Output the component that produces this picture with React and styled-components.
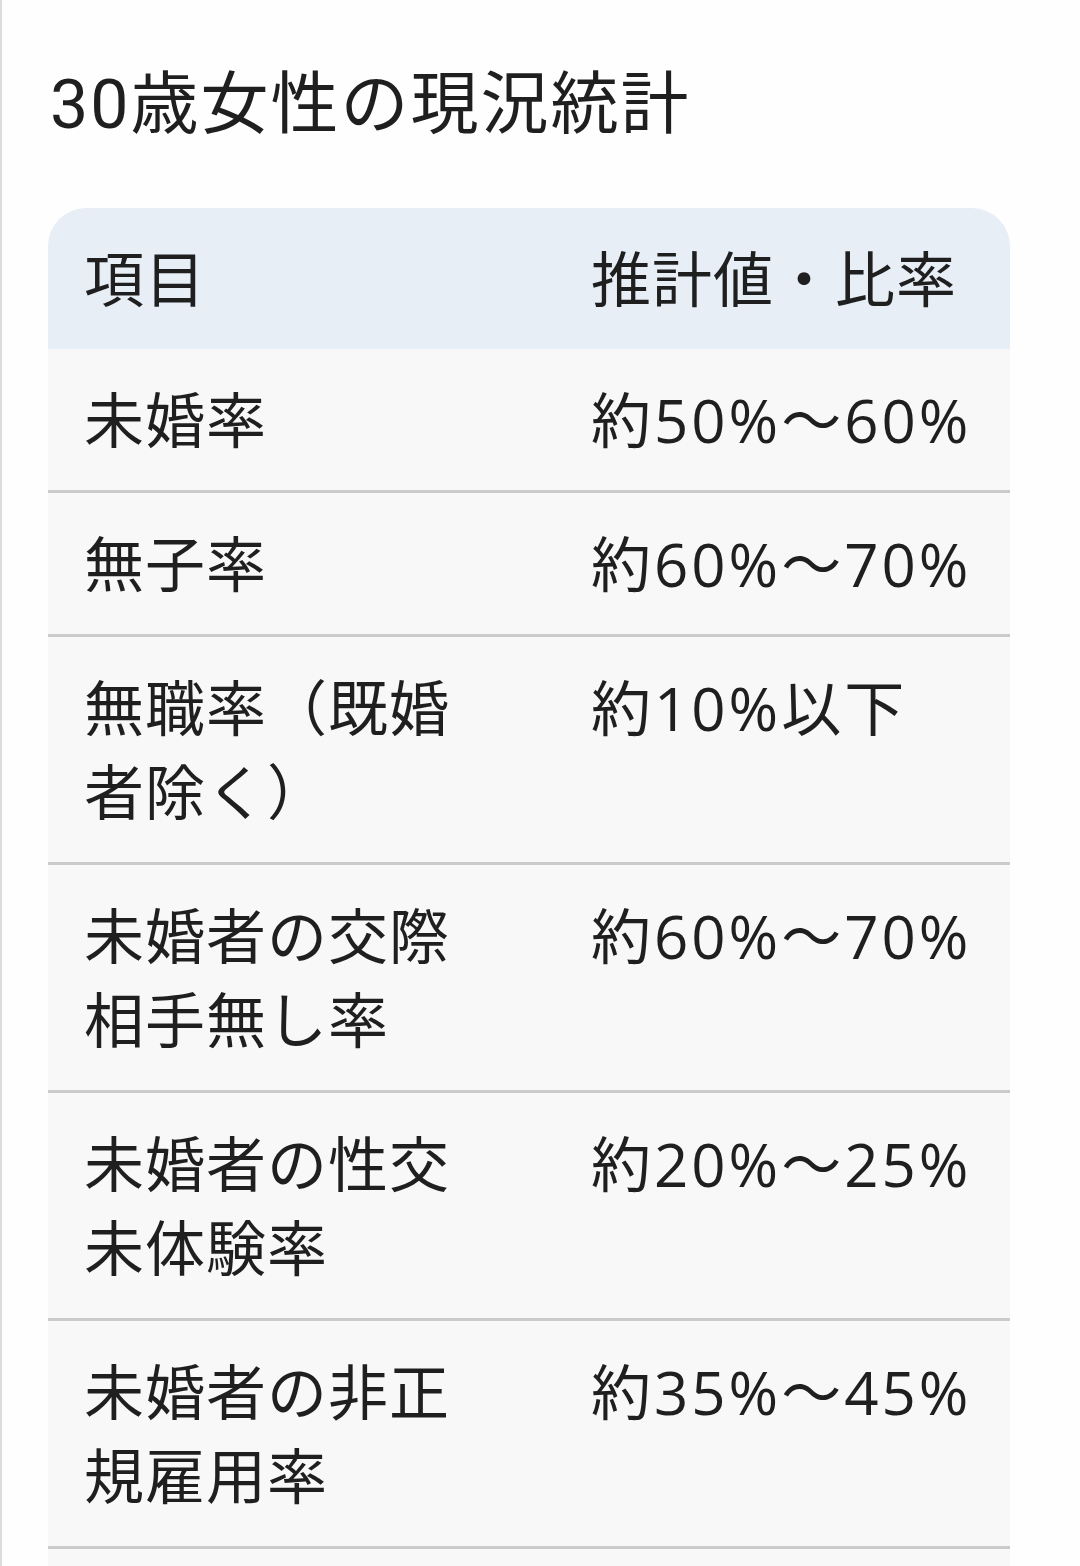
import React from "react";
import styled, { createGlobalStyle } from "styled-components";

const Global = createGlobalStyle`
  html, body { margin: 0; padding: 0; background: #ffffff; }
  body {
    font-family: "Roboto", "Noto Sans CJK JP", sans-serif;
    color: #1f1f1f;
  }
`;

const Page = styled.div`
  min-height: 1566px;
  box-sizing: border-box;
  border-left: 2px solid #dcdcdc;
  background: #fefefe;
  padding: 64px 70px 0 46px;
  overflow: hidden;
`;

const Title = styled.h1`
  margin: 0 0 62px 2px;
  font-family: "Roboto", "Noto Sans CJK JP", sans-serif;
  font-size: 68px;
  font-weight: 400;
  line-height: 82px;
  letter-spacing: 2px;
  color: #1f1f1f;
`;

const Table = styled.div`
  display: grid;
  grid-template-columns: 507px 1fr;
  width: 962px;
  border-radius: 38px 38px 0 0;
  overflow: hidden;
`;

const Row = styled.div`
  display: contents;
`;

const Cell = styled.div`
  box-sizing: border-box;
  padding: 28.5px 36px;
  padding-right: ${(p) => (p.$first ? "96px" : "20px")};
  background: ${(p) => (p.$head ? "#e8eef6" : "#f8f8f8")};
  border-bottom: ${(p) => (p.$head ? "none" : "3px solid #cbcbcb")};
  font-family: "Open Sans", "Noto Sans CJK JP", sans-serif;
  font-size: 60px;
  line-height: 84px;
  font-weight: 400;
  letter-spacing: ${(p) => (p.$value ? "3px" : "1px")};
  color: #1f1f1f;
  word-break: break-all;
  white-space: ${(p) => (p.$value ? "nowrap" : "normal")};
`;

const rows = [
  ["未婚率", "約50%〜60%"],
  ["無子率", "約60%〜70%"],
  ["無職率（既婚者除く）", "約10%以下"],
  ["未婚者の交際相手無し率", "約60%〜70%"],
  ["未婚者の性交未体験率", "約20%〜25%"],
  ["未婚者の非正規雇用率", "約35%〜45%"],
];

export default function App() {
  return (
    <>
      <Global />
      <Page>
        <Title>30歳女性の現況統計</Title>
        <Table>
          <Row>
            <Cell $head $first>項目</Cell>
            <Cell $head>推計値・比率</Cell>
          </Row>
          {rows.map(([k, v]) => (
            <Row key={k}>
              <Cell $first>{k}</Cell>
              <Cell $value>{v}</Cell>
            </Row>
          ))}
          <Row>
            <Cell $first>{"\u00a0"}</Cell>
            <Cell>{"\u00a0"}</Cell>
          </Row>
        </Table>
      </Page>
    </>
  );
}
